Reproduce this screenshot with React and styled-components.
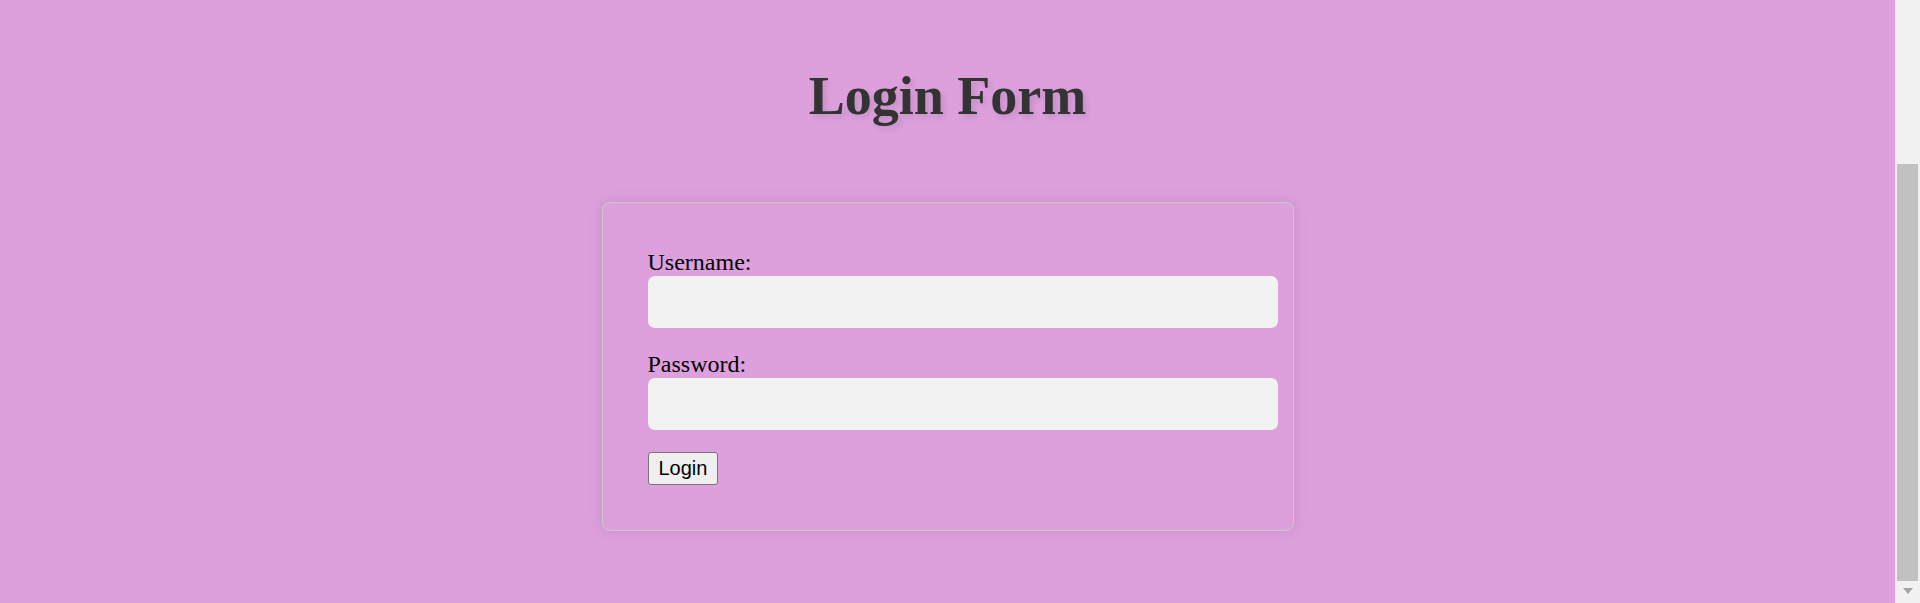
import React from "react";
import styled, { createGlobalStyle } from "styled-components";

const GlobalStyle = createGlobalStyle`
  html, body {
    margin: 0;
    padding: 0;
    height: 100%;
    overflow: hidden;
  }
  body {
    background-color: #dda0dd;
    font-family: "Liberation Serif", "Times New Roman", serif;
  }
`;

const Page = styled.div`
  display: flex;
  height: 100vh;
`;

const Main = styled.main`
  flex: 1;
  display: flex;
  flex-direction: column;
  align-items: center;
`;

const Title = styled.h1`
  margin: 66px 0 0 0;
  font-size: 54px;
  font-weight: bold;
  line-height: 60px;
  color: #333;
  text-shadow: 3px 3px 6px rgba(0, 0, 0, 0.12);
`;

const FormBox = styled.form`
  margin-top: 76px;
  width: 600px;
  padding: 45px 45px 45px;
  border: 1px solid #c9c9c9;
  border-radius: 8px;
  box-shadow: 0 0 15px rgba(0, 0, 0, 0.1);
  display: flex;
  flex-direction: column;
  align-items: flex-start;
`;

const Label = styled.label`
  display: block;
  font-size: 24px;
  line-height: 28px;
  color: #000;
`;

const Input = styled.input`
  display: block;
  width: 100%;
  height: 22px;
  padding: 15px;
  margin: 0 0 22px 0;
  border: none;
  border-radius: 7px;
  background-color: #f2f2f2;
  font-size: 20px;
  outline: none;
`;

const Button = styled.button`
  height: 33px;
  padding: 0 10px;
  font-family: "Liberation Sans", Arial, sans-serif;
  font-size: 20px;
  color: #000;
  background-color: #efefef;
  border: 1.5px solid #767676;
  border-radius: 3px;
`;

const ScrollTrack = styled.div`
  width: 25px;
  background-color: #f1f1f1;
  display: flex;
  flex-direction: column;
  align-items: center;
`;

const ScrollThumb = styled.div`
  margin-top: 164px;
  width: 21px;
  height: 417px;
  background-color: #c1c1c1;
`;

const ArrowDown = styled.div`
  margin-top: 7px;
  width: 0;
  height: 0;
  border-left: 5.5px solid transparent;
  border-right: 5.5px solid transparent;
  border-top: 6px solid #a3a3a3;
`;

const App = () => {
  return (
    <>
      <GlobalStyle />
      <Page>
        <Main>
          <Title>Login Form</Title>
          <FormBox onSubmit={(e) => e.preventDefault()}>
            <Label htmlFor="username">Username:</Label>
            <Input id="username" type="text" />
            <Label htmlFor="password">Password:</Label>
            <Input id="password" type="password" />
            <Button type="submit">Login</Button>
          </FormBox>
        </Main>
        <ScrollTrack>
          <ScrollThumb />
          <ArrowDown />
        </ScrollTrack>
      </Page>
    </>
  );
};

export default App;
